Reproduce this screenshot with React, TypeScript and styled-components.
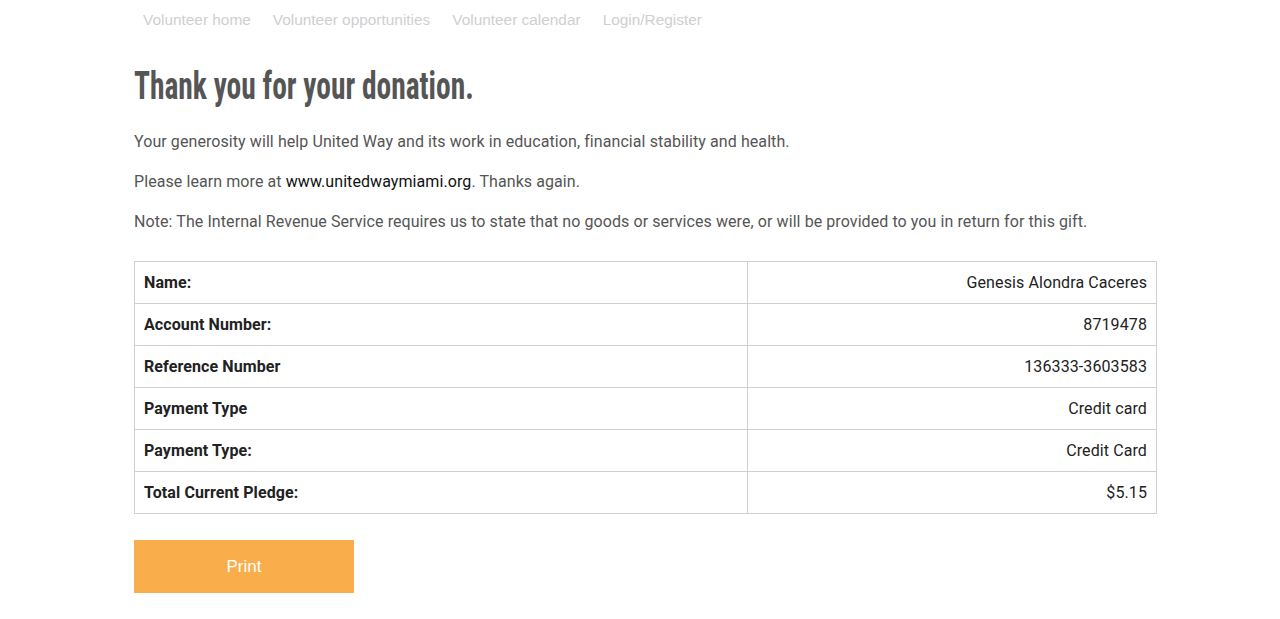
import styled, { createGlobalStyle } from "styled-components";

const GlobalStyle = createGlobalStyle`
  body {
    margin: 0;
    background: #fff;
    font-family: Roboto, "Liberation Sans", sans-serif;
  }
`;

interface Row {
  label: string;
  value: string;
}

const rows: Row[] = [
  { label: "Name:", value: "Genesis Alondra Caceres" },
  { label: "Account Number:", value: "8719478" },
  { label: "Reference Number", value: "136333-3603583" },
  { label: "Payment Type", value: "Credit card" },
  { label: "Payment Type:", value: "Credit Card" },
  { label: "Total Current Pledge:", value: "$5.15" },
];

const navItems = [
  "Volunteer home",
  "Volunteer opportunities",
  "Volunteer calendar",
  "Login/Register",
];

export default function App() {
  return (
    <>
      <GlobalStyle />
      <Page>
        <Nav>
          {navItems.map((n) => (
            <NavLink key={n}>{n}</NavLink>
          ))}
        </Nav>
        <Title>
          <TitleText>Thank you for your donation.</TitleText>
        </Title>
        <Text>
          Your generosity will help United Way and its work in education,
          financial stability and health.
        </Text>
        <Text>
          Please learn more at <Site>www.unitedwaymiami.org</Site>. Thanks
          again.
        </Text>
        <Text>
          Note: The Internal Revenue Service requires us to state that no goods
          or services were, or will be provided to you in return for this gift.
        </Text>
        <Table>
          <tbody>
            {rows.map((r, i) => (
              <tr key={i}>
                <Label>{r.label}</Label>
                <Value>{r.value}</Value>
              </tr>
            ))}
          </tbody>
        </Table>
        <PrintButton>Print</PrintButton>
      </Page>
    </>
  );
}

const Page = styled.div`
  width: 1023px;
  margin-left: 134px;
  display: flex;
  flex-direction: column;
  align-items: flex-start;
`;

const Nav = styled.nav`
  display: flex;
  gap: 22px;
  padding: 10px 0 0 9px;
  height: 30px;
`;

const NavLink = styled.a`
  font-family: "Liberation Sans", Arial, sans-serif;
  font-size: 15.4px;
  line-height: 20px;
  color: #cfcfcf;
`;

const Title = styled.h1`
  font-family: "Roboto Condensed", "DejaVu Sans Condensed", "Liberation Sans", sans-serif;
  font-weight: 700;
  font-size: 38px;
  line-height: 44px;
  color: #555;
  margin: 24px 0 22px;
  white-space: nowrap;
`;

const TitleText = styled.span`
  display: inline-block;
  transform: scaleX(0.775);
  transform-origin: left center;
`;

const Text = styled.p`
  font-size: 16px;
  line-height: 24px;
  letter-spacing: 0.08px;
  color: #555;
  margin: 0 0 16px;
`;

const Site = styled.span`
  color: #111;
`;

const Table = styled.table`
  width: 1023px;
  border-collapse: collapse;
  margin-top: 11px;
  font-size: 16px;
  letter-spacing: 0.1px;

  td {
    border: 1px solid #d0d0d0;
    height: 41px;
    padding: 0 9px;
    line-height: 20px;
  }
`;

const Label = styled.td`
  width: 60%;
  font-weight: 700;
  color: #222;
`;

const Value = styled.td`
  text-align: right;
  color: #222;
`;

const PrintButton = styled.button`
  margin-top: 26px;
  width: 220px;
  height: 53px;
  border: none;
  background: #f9ae4b;
  color: #fff;
  font-family: "Liberation Sans", Arial, sans-serif;
  font-size: 17px;
  cursor: pointer;
`;
